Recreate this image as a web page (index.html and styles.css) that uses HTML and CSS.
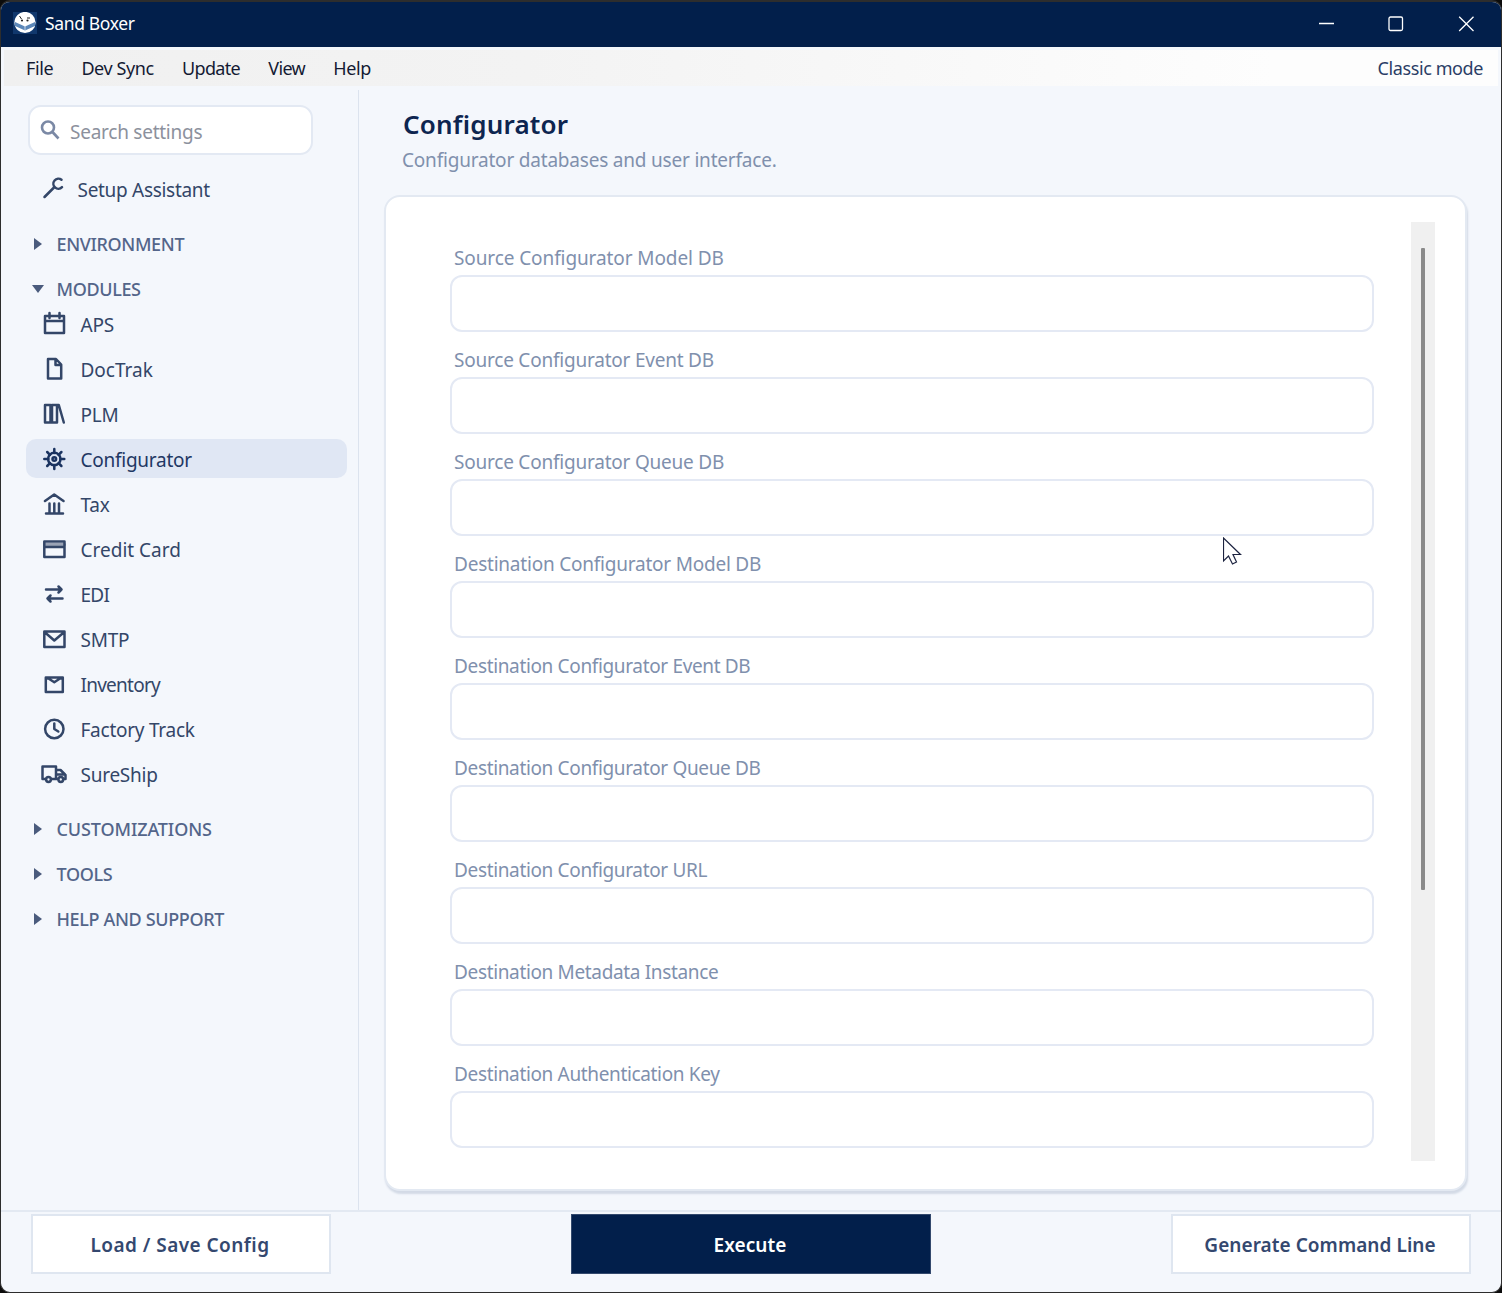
FILE: index.html
```html
<!DOCTYPE html>
<html lang="en">
<head>
    <meta charset="UTF-8">
    <title>Sand Boxer</title>
    <link rel="stylesheet" href="styles.css">
</head>
<body>
<div class="window">
    <header class="titlebar">
        <svg class="logo" width="24" height="22" viewBox="0 0 24 22">
            <rect width="24" height="22" fill="#10376d"/>
            <circle cx="12" cy="10.5" r="10.6" fill="#fff"/>
            <path d="M2 10l10 4.500L22 10v4l-10 4.500L2 14z" fill="#5b87b9"/>
            <path d="M12 14v5" stroke="#dfe9f4" stroke-width=".8"/>
            <path d="M6.500 4l2 3M14 6h3" stroke="#222" stroke-width="1"/>
            <circle cx="9" cy="8.500" r="1.100" fill="#222"/>
            <circle cx="14.500" cy="8.500" r="1.100" fill="#222"/>
        </svg>
        <span class="app-name">Sand Boxer</span>
        <div class="controls">
            <svg width="16" height="16" viewBox="0 0 16 16"><path d="M1 7.500h15"/></svg>
            <svg width="16" height="16" viewBox="0 0 16 16"><rect x="1" y="1" width="13.500" height="13.500" rx="1.500"/></svg>
            <svg width="16" height="16" viewBox="0 0 16 16"><path d="M1.200.700l14.300 14.300M15.500.700L1.200 15"/></svg>
        </div>
    </header>

    <nav class="menubar">
        <span>File</span>
        <span>Dev Sync</span>
        <span class="tight">Update</span>
        <span class="tight">View</span>
        <span>Help</span>
        <span class="mode">Classic mode</span>
    </nav>

    <div class="body">
        <aside class="sidebar">
            <label class="search">
                <svg width="22" height="22" viewBox="0 0 22 22"><circle cx="8" cy="8.500" r="6"/><path d="M12.500 13l6 6.500"/></svg>
                <input type="text" placeholder="Search settings">
            </label>
            <div class="item assistant">
                <svg class="icon" width="28" height="28" viewBox="0 0 28 28"><path d="M4.500 22L14 12.500M21.500 4.800A5 5 0 1 0 22 12.200"/></svg>
                <span>Setup Assistant</span>
            </div>

            <div class="group"><i class="arrow"></i><span>ENVIRONMENT</span></div>
            <div class="group modules"><i class="arrow open"></i><span>MODULES</span></div>

            <div class="item">
                <svg class="icon" width="28" height="28" viewBox="0 0 28 28"><path d="M5 6h19v17H5zM5 11h19M9.500 3v5M19.500 3v5"/></svg>
                <span>APS</span>
            </div>
            <div class="item">
                <svg class="icon" width="28" height="28" viewBox="0 0 28 28"><path d="M8 4h8l5.200 5.500V23.500H8zM15.500 4v6h5.500"/></svg>
                <span class="wide">DocTrak</span>
            </div>
            <div class="item">
                <svg class="icon" width="28" height="28" viewBox="0 0 28 28"><path d="M5 5h5.500v17.500H5zM12 5h5v17.500h-5zM16.500 5h2.300l5 17.500"/></svg>
                <span>PLM</span>
            </div>
            <div class="item selected">
                <svg class="icon" width="28" height="28" viewBox="0 0 28 28"><circle cx="14.300" cy="14" r="6.200"/><circle cx="14.300" cy="14" r="1.800"/><path d="M14.300 4v4M14.300 20v4M4.300 14h4M20.300 14h4M7.200 7l2.800 2.800M18.600 18.200l2.800 2.800M21.400 7l-2.800 2.800M10 18.200L7.200 21"/></svg>
                <span>Configurator</span>
            </div>
            <div class="item">
                <svg class="icon" width="28" height="28" viewBox="0 0 28 28"><path d="M5 11l9.200-6.500 9.300 6.500M6 23.500h17M9.500 13.500v9M14.300 13.500v9M19 13.500v9"/></svg>
                <span>Tax</span>
            </div>
            <div class="item">
                <svg class="icon" width="28" height="28" viewBox="0 0 28 28"><path class="stripe" d="M4.500 9.500h20"/><path d="M4.300 6.500h20.200v15.500H4.300zM4.300 12h20.200"/></svg>
                <span class="wide">Credit Card</span>
            </div>
            <div class="item">
                <svg class="icon" width="28" height="28" viewBox="0 0 28 28"><path d="M6 9.500h15.500M18.500 6.500l3 3-3 3M22.500 18.500H7.500M10.500 15.500l-3 3 3 3"/></svg>
                <span class="narrow">EDI</span>
            </div>
            <div class="item">
                <svg class="icon" width="28" height="28" viewBox="0 0 28 28"><path d="M4.300 6.500h20.200v15.500H4.300zM4.500 7l9.800 8.500L24.300 7"/></svg>
                <span>SMTP</span>
            </div>
            <div class="item">
                <svg class="icon" width="28" height="28" viewBox="0 0 28 28"><path d="M5.800 7.500h17v14.500h-17zM6 8.500h2.500l5.800 3.800L20 8.500h2.500"/></svg>
                <span class="narrow">Inventory</span>
            </div>
            <div class="item">
                <svg class="icon" width="28" height="28" viewBox="0 0 28 28"><circle cx="14.300" cy="14" r="9.200"/><path d="M14.300 8.500V14l4 2.500"/></svg>
                <span>Factory Track</span>
            </div>
            <div class="item">
                <svg class="icon" width="28" height="28" viewBox="0 0 28 28"><path d="M5 19H2.500V6.500h13.500V19H11.500M16 10h4.500l5 5V19H24M18 19h-2M17 14.500h8"/><circle cx="8.500" cy="19.500" r="2.400"/><circle cx="20.800" cy="19.500" r="2.400"/></svg>
                <span>SureShip</span>
            </div>

            <div class="group after"><i class="arrow"></i><span class="customizations">CUSTOMIZATIONS</span></div>
            <div class="group"><i class="arrow"></i><span>TOOLS</span></div>
            <div class="group"><i class="arrow"></i><span>HELP AND SUPPORT</span></div>
        </aside>

        <main class="content">
            <h1>Configurator</h1>
            <p class="subtitle">Configurator databases and user interface.</p>
            <section class="card">
                <form class="fields" autocomplete="off">
                    <label><span>Source Configurator Model DB</span><input type="text"></label>
                    <label><span>Source Configurator Event DB</span><input type="text"></label>
                    <label><span>Source Configurator Queue DB</span><input type="text"></label>
                    <label><span>Destination Configurator Model DB</span><input type="text"></label>
                    <label><span>Destination Configurator Event DB</span><input type="text"></label>
                    <label><span>Destination Configurator Queue DB</span><input type="text"></label>
                    <label><span>Destination Configurator URL</span><input type="text"></label>
                    <label><span>Destination Metadata Instance</span><input type="text"></label>
                    <label><span>Destination Authentication Key</span><input type="text"></label>
                </form>
                <div class="scrollbar"><div class="thumb"></div></div>
            </section>
        </main>
    </div>

    <footer class="actions">
        <button class="load">Load / Save Config</button>
        <button class="primary">Execute</button>
        <button>Generate Command Line</button>
    </footer>
</div>
<svg class="cursor" width="20" height="29" viewBox="0 0 20 29"><path d="M.5 1v23l5-5 4 8 4-2-3.500-7.500h7.500z"/></svg>
</body>
</html>
```
FILE: styles.css
```css
* {
    box-sizing: border-box;
}
body {
    margin: 0;
    background: #0c0c0c;
    font-family: "Noto Sans", "Open Sans", sans-serif;
    font-size: 19px;
    letter-spacing: -0.25px;
    color: #334668;
}
.window {
    width: 1502px;
    height: 1293px;
    display: flex;
    flex-direction: column;
    border: 1px solid #2d2d2d;
    border-top-width: 2px;
    border-radius: 10px;
    background: #f4f7fc;
    overflow: hidden;
}

/* title bar */
.titlebar {
    height: 45px;
    flex: none;
    display: flex;
    align-items: center;
    padding: 0 27px 3px 12px;
    background: #021f4b;
    color: #fff;
}
.app-name {
    margin-left: 8px;
    font-size: 17.5px;
    letter-spacing: -0.35px;
}
.controls {
    display: flex;
    gap: 54px;
    margin-left: auto;
    padding-top: 2px;
}
.controls svg {
    fill: none;
    stroke: #fff;
    stroke-width: 1.3;
}

/* menu */
.menubar {
    height: 36px;
    flex: none;
    display: flex;
    align-items: center;
    gap: 28.2px;
    margin: 3px 3px 0 3px;
    padding: 0 15px 1px 22px;
    background: linear-gradient(90deg, #f0f0f0, #f3f3f3 35%, #fdfdfd 85%);
    font-size: 18px;
    letter-spacing: -0.4px;
    color: #141a33;
}
.menubar .tight {
    letter-spacing: -0.65px;
}
.mode {
    margin-left: auto;
    color: #2b3d66;
}

.body {
    flex: 1;
    min-height: 0;
    display: flex;
}

/* sidebar */
.sidebar {
    width: 358px;
    flex: none;
    margin-top: 4px;
    padding: 15px 11px 0 25px;
    border-right: 1px solid #dce3ee;
}
.search {
    width: 285px;
    height: 50px;
    display: flex;
    align-items: center;
    margin-left: 2px;
    padding-left: 10px;
    border: 2px solid #e3e9f3;
    border-radius: 13px;
    background: #fff;
}
.search svg {
    fill: none;
    stroke: #7b89a5;
    stroke-width: 2.6;
}
.search input {
    width: 220px;
    padding: 3px 0 0 8px;
    border: 0;
    outline: 0;
    background: none;
    font: inherit;
    letter-spacing: inherit;
}
.search input::placeholder {
    color: #8c919d;
    opacity: 1;
}
.item {
    height: 39px;
    display: flex;
    align-items: center;
    margin-bottom: 6px;
    padding-left: 14px;
    border-radius: 10px;
}
.item span {
    padding-top: 2px;
    margin-left: 12.5px;
}
.item .wide {
    letter-spacing: 0;
}
.item .narrow {
    letter-spacing: -0.75px;
}
.icon {
    fill: none;
    stroke: #334668;
    stroke-width: 2.5;
    stroke-linejoin: round;
    stroke-linecap: round;
}
.icon .stripe {
    stroke: #9aa3b5;
    stroke-width: 3;
}
.assistant {
    margin-top: 14px;
    margin-bottom: 15px;
}
.item.assistant span {
    margin-left: 9.5px;
    letter-spacing: -0.3px;
}
.selected {
    background: #e0e7f4;
    color: #1f3864;
}
.selected .icon {
    stroke: #1a3360;
}
.group {
    height: 39px;
    display: flex;
    align-items: center;
    margin-bottom: 6px;
    padding-top: 2px;
    font-size: 18px;
    font-weight: 500;
    letter-spacing: -0.35px;
    color: #53658a;
}
.group.modules {
    margin-bottom: -3px;
}
.group.after {
    margin-top: 15px;
}
.customizations {
    letter-spacing: -0.1px;
}
.arrow {
    width: 8px;
    margin: 0 14.5px 0 8px;
    border: solid transparent;
    border-width: 6px 0 6px 8px;
    border-left-color: #4a5b7d;
}
.arrow.open {
    width: 12px;
    margin: 0 12.5px 0 6px;
    border-width: 8px 6px 0 6px;
    border-color: #4a5b7d transparent transparent;
}

/* content */
.content {
    flex: 1;
    padding: 21px 34px 0 25px;
}
h1 {
    margin: 0 0 0 19px;
    font-size: 26px;
    line-height: 35px;
    font-weight: 600;
    letter-spacing: 0.2px;
    color: #0d2550;
}
.subtitle {
    margin: 4px 0 0 18px;
    line-height: 28px;
    letter-spacing: -0.2px;
    color: #8090ad;
}
.card {
    height: 996px;
    display: flex;
    justify-content: space-between;
    margin-top: 21px;
    padding: 25px 30px 28px 64px;
    border: 2px solid #e3e9f2;
    border-radius: 16px;
    background: #fff;
    box-shadow: 1px 3px 2px #d3dae6;
}
.fields {
    width: 924px;
    padding-top: 21px;
}
.fields label {
    display: block;
    height: 102px;
    letter-spacing: -0.22px;
    color: #8090ad;
}
.fields label:first-child {
    letter-spacing: -0.1px;
}
.fields label:nth-child(n+5) {
    letter-spacing: -0.35px;
}
.fields span {
    display: block;
    height: 32px;
    line-height: 30px;
    padding-left: 4px;
}
.fields input {
    width: 924px;
    height: 57px;
    border: 2px solid #e4e9f4;
    border-radius: 12px;
    background: #fff;
}
.scrollbar {
    width: 24px;
    padding: 26px 10px 0;
    background: #f0f0f0;
}
.thumb {
    width: 4px;
    height: 642px;
    border-radius: 1px;
    background: #8a8a8a;
}

/* footer */
.actions {
    height: 82px;
    flex: none;
    display: flex;
    justify-content: space-between;
    padding: 2px 30px 0;
    border-top: 2px solid #e3e9f2;
}
button {
    width: 300px;
    height: 60px;
    padding: 1px 8px 0 6px;
    border: 2px solid #dfe6f0;
    background: #fff;
    font: 600 19px "Noto Sans", "Open Sans", sans-serif;
    letter-spacing: 0.05px;
    color: #34486f;
}
.load {
    letter-spacing: 0.45px;
}
.primary {
    width: 360px;
    border: 1px solid #33496d;
    background: #021f4b;
    color: #fff;
}

.cursor {
    position: absolute;
    left: 1223px;
    top: 537px;
    fill: #fff;
    stroke: #1c2340;
    stroke-width: 1.2;
}
```
